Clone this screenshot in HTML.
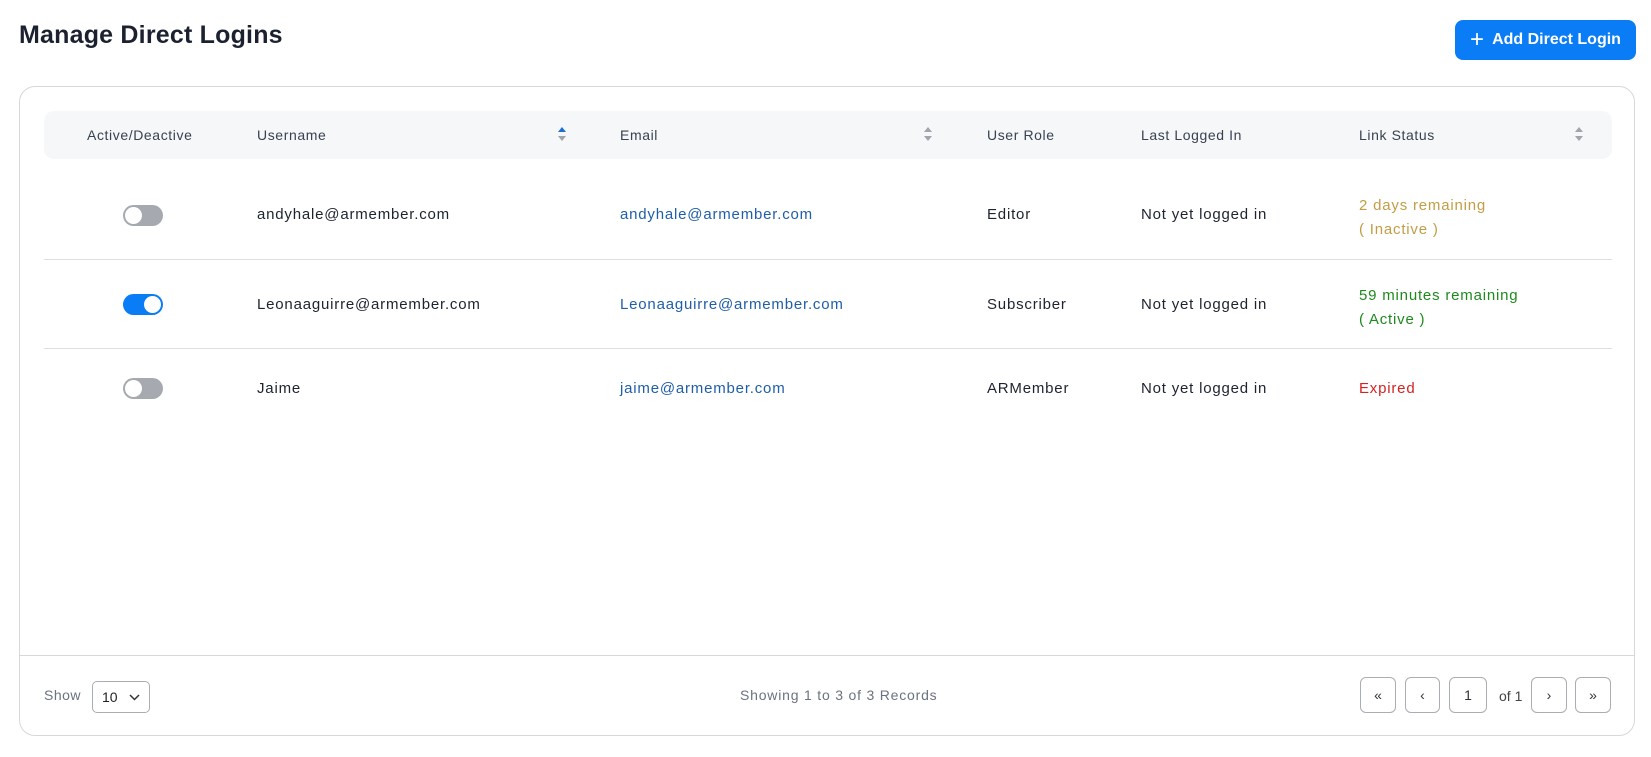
<!DOCTYPE html>
<html><head><meta charset="utf-8"><style>
*{box-sizing:border-box;margin:0;padding:0}
body{width:1651px;height:757px;background:#fff;font-family:"Liberation Sans",sans-serif;color:#1e2330;position:relative;overflow:hidden}
.abs{position:absolute}
h1{position:absolute;left:19px;top:21px;font-size:25px;font-weight:bold;color:#1c2130;letter-spacing:0.2px}
.btn{position:absolute;left:1455px;top:20px;width:181px;height:40px;background:#0a7cf5;border-radius:8px;color:#fff;font-weight:bold;font-size:16px;display:flex;align-items:center;justify-content:center;gap:8px}
.card{position:absolute;left:19px;top:86px;width:1616px;height:650px;border:1px solid #d6d8dc;border-radius:16px}
.head{position:absolute;left:44px;top:111px;width:1568px;height:48px;background:#f5f7f9;border-radius:10px}
.th{position:absolute;top:127px;font-size:14px;color:#3a4150;letter-spacing:0.6px}
.td{position:absolute;font-size:15px;color:#1e2330;letter-spacing:0.8px}
.em{color:#1f5ea8}
.line{position:absolute;left:44px;width:1568px;height:1px;background:#dcdee2}
.tg{position:absolute;left:123px;width:40px;height:21px;border-radius:11px;background:#a6a9b0}
.tg::after{content:"";position:absolute;top:2px;left:2px;width:17px;height:17px;border-radius:50%;background:#fff}
.tg.on{background:#0a7cf5}.tg.on::after{left:21px}
.sort{position:absolute;top:126px;width:8px}
.pb{position:absolute;top:677px;height:36px;border:1px solid #a9adb4;border-radius:6px;display:flex;align-items:center;justify-content:center;font-size:14px;color:#333}
</style></head><body>
<h1>Manage Direct Logins</h1>
<div class="btn"><span style="font-size:24px;font-weight:normal;line-height:1">+</span>Add Direct Login</div>
<div class="card"></div>
<div class="head"></div>
<div class="th" style="left:87px">Active/Deactive</div>
<div class="th" style="left:257px">Username</div>
<svg class="sort" style="left:558px" height="16" viewBox="0 0 8 16"><path d="M4 1L8 6H0z" fill="#1f6fd1"/><path d="M4 15L8 10H0z" fill="#a0a4ab"/></svg>
<div class="th" style="left:620px">Email</div>
<svg class="sort" style="left:924px" height="16" viewBox="0 0 8 16"><path d="M4 1L8 6H0z" fill="#a0a4ab"/><path d="M4 15L8 10H0z" fill="#a0a4ab"/></svg>
<div class="th" style="left:987px">User Role</div>
<div class="th" style="left:1141px">Last Logged In</div>
<div class="th" style="left:1359px">Link Status</div>
<svg class="sort" style="left:1575px" height="16" viewBox="0 0 8 16"><path d="M4 1L8 6H0z" fill="#a0a4ab"/><path d="M4 15L8 10H0z" fill="#a0a4ab"/></svg>

<div class="tg" style="top:205px"></div>
<div class="td" style="left:257px;top:206px">andyhale@armember.com</div>
<div class="td em" style="left:620px;top:206px">andyhale@armember.com</div>
<div class="td" style="left:987px;top:206px">Editor</div>
<div class="td" style="left:1141px;top:206px">Not yet logged in</div>
<div class="td" style="left:1359px;top:194px;color:#c29d45;line-height:24px">2 days remaining<br>( Inactive )</div>
<div class="line" style="top:259px"></div>

<div class="tg on" style="top:294px"></div>
<div class="td" style="left:257px;top:296px">Leonaaguirre@armember.com</div>
<div class="td em" style="left:620px;top:296px">Leonaaguirre@armember.com</div>
<div class="td" style="left:987px;top:296px">Subscriber</div>
<div class="td" style="left:1141px;top:296px">Not yet logged in</div>
<div class="td" style="left:1359px;top:284px;color:#1e8a1e;line-height:24px">59 minutes remaining<br>( Active )</div>
<div class="line" style="top:348px"></div>

<div class="tg" style="top:378px"></div>
<div class="td" style="left:257px;top:380px">Jaime</div>
<div class="td em" style="left:620px;top:380px">jaime@armember.com</div>
<div class="td" style="left:987px;top:380px">ARMember</div>
<div class="td" style="left:1141px;top:380px">Not yet logged in</div>
<div class="td" style="left:1359px;top:380px;color:#d42222">Expired</div>

<div class="abs" style="left:20px;top:655px;width:1614px;height:1px;background:#d6d8dc"></div>
<div class="abs" style="left:44px;top:687px;font-size:14px;color:#6b7280;letter-spacing:0.5px">Show</div>
<div class="abs" style="left:92px;top:681px;width:58px;height:32px;border:1px solid #a9adb4;border-radius:5px;font-size:14px;padding:7px 0 0 9px;color:#222">10
<svg class="abs" style="left:36px;top:12px" width="11" height="7" viewBox="0 0 11 7"><path d="M1 1l4.5 4.5L10 1" stroke="#333" stroke-width="1.5" fill="none"/></svg></div>
<div class="abs" style="left:740px;top:687px;font-size:14px;color:#6b7280;letter-spacing:0.8px">Showing 1 to 3 of 3 Records</div>
<div class="pb" style="left:1360px;width:36px">«</div>
<div class="pb" style="left:1405px;width:35px">‹</div>
<div class="pb" style="left:1449px;width:38px">1</div>
<div class="abs" style="left:1499px;top:688px;font-size:14px;color:#444">of 1</div>
<div class="pb" style="left:1531px;width:36px">›</div>
<div class="pb" style="left:1575px;width:36px">»</div>
</body></html>
